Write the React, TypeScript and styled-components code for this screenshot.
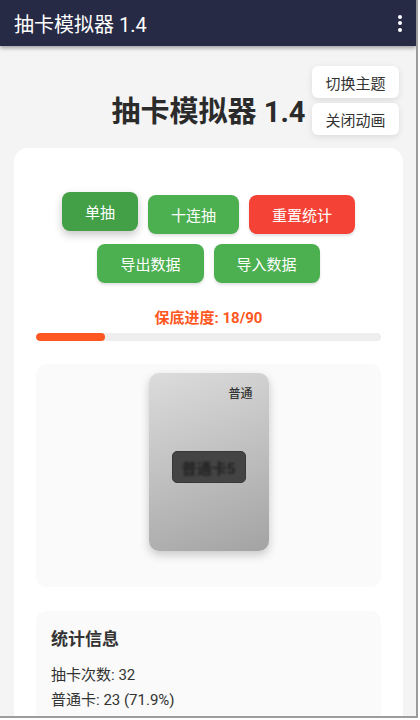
import React from "react";
import styled, { createGlobalStyle } from "styled-components";

const GlobalStyle = createGlobalStyle`
  html, body {
    margin: 0;
    padding: 0;
    background: #ffffff;
  }
  * {
    box-sizing: border-box;
  }
  body {
    font-family: Roboto, "Noto Sans CJK SC", "Noto Sans", sans-serif;
    color: #333;
  }
`;

const Frame = styled.div`
  width: 418px;
  height: 718px;
  border-right: 2px solid #9c9c9c;
  border-bottom: 2px solid #9c9c9c;
  overflow: hidden;
  position: relative;
  background: #f4f4f4;
  display: flex;
  flex-direction: column;
`;

const TopBar = styled.header`
  height: 46px;
  flex-shrink: 0;
  background: #272a45;
  color: #fff;
  display: flex;
  align-items: center;
  justify-content: space-between;
  padding: 0 12px 0 14px;
  font-size: 20px;
  box-shadow: 0 2px 4px rgba(0, 0, 0, 0.35);
  position: relative;
  z-index: 2;
`;

const MenuButton = styled.div`
  display: flex;
  flex-direction: column;
  gap: 2.5px;
  padding: 4px 2px;
`;

const Dot = styled.span`
  width: 4px;
  height: 4px;
  border-radius: 50%;
  background: #fff;
`;

const Main = styled.main`
  flex: 1;
  padding: 0 13px 0 14px;
`;

const Title = styled.h1`
  margin: 48px 0 18px;
  text-align: center;
  font-size: 29px;
  line-height: 36px;
  font-weight: 700;
  color: #2b2b2b;
`;

const FloatingTools = styled.div`
  position: absolute;
  top: 66px;
  right: 17px;
  display: flex;
  flex-direction: column;
  gap: 5px;
  z-index: 3;
`;

const ToolButton = styled.button`
  width: 87px;
  height: 32px;
  border: none;
  border-radius: 6px;
  background: #fff;
  color: #333;
  font-family: inherit;
  font-size: 15px;
  box-shadow: 0 2px 6px rgba(0, 0, 0, 0.1);
`;

const Card = styled.section`
  background: #fff;
  border-radius: 14px;
  padding: 47px 22px 24px;
`;

const ButtonGroup = styled.div`
  display: flex;
  flex-wrap: wrap;
  justify-content: center;
  gap: 10px;
`;

const ActionButton = styled.button<{ $tone?: "green" | "red"; $active?: boolean }>`
  height: 39px;
  padding: 0 23px;
  border: none;
  border-radius: 8px;
  font-family: inherit;
  font-size: 15px;
  color: #fff;
  background: ${(p) =>
    p.$tone === "red" ? "#f44336" : p.$active ? "#43a047" : "#4caf50"};
  box-shadow: ${(p) =>
    p.$active ? "0 4px 8px rgba(0,0,0,0.22)" : "0 2px 3px rgba(0,0,0,0.12)"};
  transform: ${(p) => (p.$active ? "translateY(-3px)" : "none")};
`;

const PityLabel = styled.div`
  margin-top: 25px;
  text-align: center;
  font-size: 15px;
  line-height: 20px;
  font-weight: 700;
  color: #ff5722;
`;

const ProgressTrack = styled.div`
  margin-top: 5px;
  height: 8px;
  border-radius: 4px;
  background: #eeeeee;
  overflow: hidden;
`;

const ProgressFill = styled.div`
  height: 100%;
  border-radius: 4px;
  background: #ff5722;
`;

const DisplayArea = styled.div`
  margin-top: 23px;
  background: #fafafa;
  border-radius: 10px;
  padding: 9px 0 36px;
  display: flex;
  justify-content: center;
`;

const GachaCard = styled.div`
  width: 120px;
  height: 178px;
  border-radius: 10px;
  background: linear-gradient(160deg, #dcdcdc 0%, #bdbdbd 55%, #a3a3a3 100%);
  box-shadow: 0 4px 10px rgba(0, 0, 0, 0.2);
  position: relative;
  display: flex;
  align-items: center;
  justify-content: center;
  padding-top: 10px;
`;

const Rarity = styled.span`
  position: absolute;
  top: 11px;
  right: 16px;
  font-size: 12px;
  font-weight: 500;
  color: #333;
`;

const NameBox = styled.div`
  width: 74px;
  height: 32px;
  border-radius: 5px;
  background: #444444;
  border: 1px solid #383838;
  display: flex;
  align-items: center;
  justify-content: center;
`;

const NameText = styled.span`
  font-size: 15px;
  font-weight: 700;
  color: #232323;
  filter: blur(0.9px);
`;

const StatsPanel = styled.div`
  margin-top: 24px;
  background: #fafafa;
  border-radius: 10px;
  padding: 16px 15px 20px;
`;

const StatsTitle = styled.h3`
  margin: 0 0 12px;
  font-size: 17px;
  line-height: 24px;
  font-weight: 700;
  color: #333;
`;

const StatLine = styled.div`
  font-size: 15px;
  line-height: 25px;
  color: #333;
`;

const stats = [
  { label: "抽卡次数", value: "32" },
  { label: "普通卡", value: "23 (71.9%)" },
];

export default function App() {
  const pity = 18;
  const pityMax = 90;

  return (
    <>
      <GlobalStyle />
      <Frame>
        <TopBar>
          <span>抽卡模拟器 1.4</span>
          <MenuButton>
            <Dot />
            <Dot />
            <Dot />
          </MenuButton>
        </TopBar>

        <FloatingTools>
          <ToolButton>切换主题</ToolButton>
          <ToolButton>关闭动画</ToolButton>
        </FloatingTools>

        <Main>
          <Title>抽卡模拟器 1.4</Title>
          <Card>
            <ButtonGroup>
              <ActionButton $active>单抽</ActionButton>
              <ActionButton>十连抽</ActionButton>
              <ActionButton $tone="red">重置统计</ActionButton>
              <ActionButton>导出数据</ActionButton>
              <ActionButton>导入数据</ActionButton>
            </ButtonGroup>

            <PityLabel>
              保底进度: {pity}/{pityMax}
            </PityLabel>
            <ProgressTrack>
              <ProgressFill style={{ width: `${(pity / pityMax) * 100}%` }} />
            </ProgressTrack>

            <DisplayArea>
              <GachaCard>
                <Rarity>普通</Rarity>
                <NameBox>
                  <NameText>普通卡5</NameText>
                </NameBox>
              </GachaCard>
            </DisplayArea>

            <StatsPanel>
              <StatsTitle>统计信息</StatsTitle>
              {stats.map((s) => (
                <StatLine key={s.label}>
                  {s.label}: {s.value}
                </StatLine>
              ))}
            </StatsPanel>
          </Card>
        </Main>
      </Frame>
    </>
  );
}
